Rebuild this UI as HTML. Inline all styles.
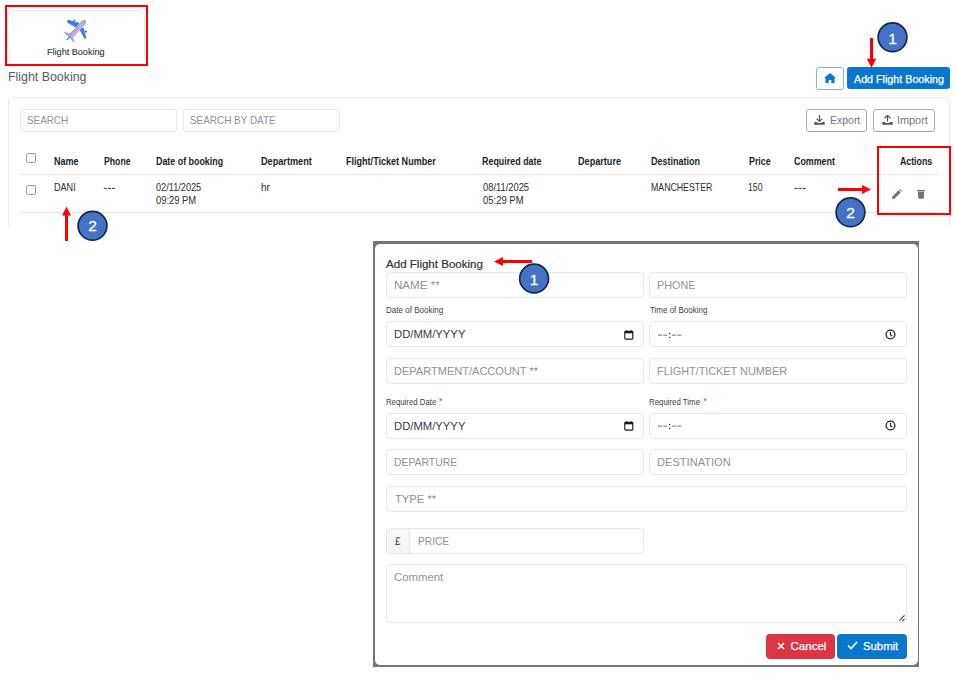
<!DOCTYPE html>
<html><head><meta charset="utf-8">
<style>
*{box-sizing:border-box;margin:0;padding:0}
html,body{width:956px;height:677px;overflow:hidden;background:#fff;font-family:"Liberation Sans",sans-serif;color:#212529}
.a{position:absolute}
.t{position:absolute;white-space:nowrap;line-height:1;transform-origin:0 0}
.inp{position:absolute;border:1px solid #e5e8eb;border-radius:4px;background:#fff}
.cb{position:absolute;width:10px;height:10px;border:1px solid #999b9d;border-radius:2px;background:#fff}
</style></head><body>

<!-- top-left tile -->
<div class="a" style="left:6.5px;top:9.5px;width:138.2px;height:56px;border:1px solid #e6ebef;border-radius:6px"></div>
<div class="a" style="left:5px;top:5px;width:143px;height:61px;border:2px solid #f00"></div>
<svg class="a" style="left:60px;top:15px" width="30" height="30" viewBox="0 0 30 30">
  <rect x="13.6" y="4.6" width="1.6" height="2" fill="#666" transform="rotate(20 14.4 5.6)"/>
  <rect x="25" y="15.8" width="2" height="1.6" fill="#666" transform="rotate(20 26 16.6)"/>
  <path d="M7.2 5.6 Q6.6 7.4 8.2 8.2 L16 12.4 L19.6 8 L9.2 5 Q7.8 4.7 7.2 5.6 Z" fill="#3d7fdc"/>
  <path d="M19.2 14.2 L24.3 23.2 Q25.3 24.6 26 23.6 Q26.3 22.8 26 21.6 L23.6 12.6 Z" fill="#3d7fdc"/>
  <path d="M4 17.6 Q3.8 16.9 4.8 16.9 L10.3 18.3 L13.6 23.8 L14.2 26.4 Q14 27.3 13 26.8 L8.3 21.8 Z" fill="#b6a3d6"/>
  <path d="M9.2 19.6 L21.8 6.2 Q24.2 4 25.8 5.3 Q27 6.7 25.4 9.2 L12.6 23.2 Q11.3 24 10.2 23.2 Q8.6 21.4 9.2 19.6 Z" fill="#c0aede"/>
  <path d="M9.2 19.6 L21.8 6.2 Q23 5 24 4.8 L10.5 19.8 Z" fill="#9f8fbd"/>
  <path d="M6.3 24.6 L10.2 20.6 Q11.2 20.2 11.4 21.2 L7.6 25.2 Q6.6 25.6 6.3 24.6 Z" fill="#3f9bf0"/>
  <ellipse cx="24.3" cy="6.5" rx="1.4" ry="0.8" fill="#56b0f0" transform="rotate(40 24.3 6.5)"/>
</svg>

<!-- home + add -->
<div class="a" style="left:816px;top:67px;width:27.5px;height:22.5px;border:1.2px solid #7cb9e9;border-radius:3px"></div>
<svg class="a" style="left:824px;top:73px" width="12" height="10" viewBox="0 0 12 10"><path d="M6 0 L12 5 L10.5 5 L10.5 10 L7.3 10 L7.3 7 L4.7 7 L4.7 10 L1.5 10 L1.5 5 L0 5 Z" fill="#0a74cf"/></svg>
<div class="a" style="left:847px;top:67px;width:103px;height:22px;background:#0a77cf;border-radius:3px"></div>

<!-- card -->
<div class="a" style="left:8px;top:97px;width:942px;height:160px;border:1px solid #e8ebee;border-radius:5px"></div>
<div class="a" style="left:0;top:226px;width:956px;height:40px;background:#fff"></div>

<div class="inp" style="left:20px;top:109px;width:157px;height:23px;border-radius:3px"></div>
<div class="inp" style="left:183px;top:109px;width:157px;height:23px;border-radius:3px"></div>

<div class="a" style="left:806px;top:109px;width:61px;height:23px;border:1.2px solid #a3a8ad;border-radius:3px"></div>
<div class="a" style="left:873px;top:109px;width:62px;height:23px;border:1.2px solid #a3a8ad;border-radius:3px"></div>
<svg class="a" style="left:814px;top:115px" width="11" height="10" viewBox="0 0 11 10"><path d="M5.5 0 V6" stroke="#50565c" stroke-width="1.2"/><path d="M2.6 3.6 L5.5 6.4 L8.4 3.6" fill="none" stroke="#50565c" stroke-width="1.3"/><path d="M0.3 7 H2.8 L3.8 8 H7.2 L8.2 7 H10.7 V9.8 H0.3 Z" fill="#50565c"/></svg>
<svg class="a" style="left:881.5px;top:115px" width="11" height="10" viewBox="0 0 11 10"><path d="M5.5 0.6 V6.6" stroke="#50565c" stroke-width="1.2"/><path d="M2.6 3.2 L5.5 0.4 L8.4 3.2" fill="none" stroke="#50565c" stroke-width="1.3"/><path d="M0.3 7 H2.8 L3.8 8 H7.2 L8.2 7 H10.7 V9.8 H0.3 Z" fill="#50565c"/></svg>

<!-- table -->
<div class="cb" style="left:26px;top:153px"></div>
<div class="a" style="left:20px;top:174px;width:918px;height:1px;background:#e3e7eb"></div>
<div class="cb" style="left:26px;top:185px"></div>
<div class="a" style="left:20px;top:212px;width:918px;height:1px;background:#e3e7eb"></div>
<svg class="a" style="left:103px;top:186.5px" width="13" height="3" viewBox="0 0 13 3"><rect x="0.8" y="0.8" width="3" height="1.2" fill="#4a4e53"/><rect x="4.9" y="0.8" width="3" height="1.2" fill="#4a4e53"/><rect x="9" y="0.8" width="3" height="1.2" fill="#4a4e53"/></svg>
<svg class="a" style="left:794px;top:186.5px" width="13" height="3" viewBox="0 0 13 3"><rect x="0.5" y="0.8" width="3" height="1.2" fill="#4a4e53"/><rect x="4.6" y="0.8" width="3" height="1.2" fill="#4a4e53"/><rect x="8.7" y="0.8" width="3" height="1.2" fill="#4a4e53"/></svg>

<!-- action icons -->
<svg class="a" style="left:891px;top:189px" width="11" height="11" viewBox="0 0 11 11"><path d="M1 10 L1.3 7.6 L7.6 1.3 L9.7 3.4 L3.4 9.7 Z" fill="#6c737a"/><path d="M8.2 0.7 L9 0 L11 2 L10.3 2.8 Z" fill="#6c737a"/></svg>
<svg class="a" style="left:916px;top:189px" width="10" height="11" viewBox="0 0 10 11"><rect x="1" y="1.1" width="8" height="1.4" rx="0.4" fill="#6c737a"/><path d="M1.8 3 H8.2 L7.7 9.3 Q7.6 9.8 7.1 9.8 H2.9 Q2.4 9.8 2.3 9.3 Z" fill="#6c737a"/></svg>
<div class="a" style="left:877px;top:146px;width:74px;height:69px;border:2px solid #f00"></div>

<!-- modal -->
<div class="a" style="left:373px;top:241px;width:546px;height:426px;background:#767676"></div>
<div class="a" style="left:374.5px;top:244px;width:543.5px;height:421px;background:#fff;border-radius:5px"></div>

<div class="inp" style="left:385.5px;top:272px;width:258px;height:26px"></div>
<div class="inp" style="left:649px;top:272px;width:258px;height:26px"></div>
<div class="inp" style="left:385.5px;top:321.3px;width:258px;height:26px"></div>
<div class="inp" style="left:649px;top:321.3px;width:258px;height:26px"></div>
<div class="inp" style="left:385.5px;top:358px;width:258px;height:26px"></div>
<div class="inp" style="left:649px;top:358px;width:258px;height:26px"></div>
<div class="inp" style="left:385.5px;top:412.5px;width:258px;height:26px"></div>
<div class="inp" style="left:649px;top:412.5px;width:258px;height:26px"></div>
<div class="inp" style="left:385.5px;top:449px;width:258px;height:26px"></div>
<div class="inp" style="left:649px;top:449px;width:258px;height:26px"></div>
<div class="inp" style="left:385.5px;top:485.5px;width:521.5px;height:26px"></div>
<div class="inp" style="left:385.5px;top:528px;width:258px;height:25.5px;overflow:hidden"><div class="a" style="left:0;top:0;width:23.5px;height:24px;background:#f6f7f8;border-right:1px solid #e5e8eb"></div></div>
<div class="inp" style="left:385.5px;top:564px;width:521.5px;height:58.5px"></div>
<svg class="a" style="left:898px;top:614px" width="8" height="8" viewBox="0 0 8 8"><path d="M6.5 1.4 L1.3 6.6 M6.6 4.9 L4.2 7" stroke="#444" stroke-width="1.1"/></svg>

<svg class="a" style="left:623.5px;top:329.5px" width="10" height="10" viewBox="0 0 10 10"><rect x="0.8" y="1.3" width="8" height="7.8" rx="0.8" fill="none" stroke="#1a1a1a" stroke-width="1.15"/><rect x="0.8" y="1.3" width="8" height="2" fill="#1a1a1a"/><rect x="1.8" y="0.3" width="1.1" height="1.5" fill="#1a1a1a"/><rect x="6.7" y="0.3" width="1.1" height="1.5" fill="#1a1a1a"/></svg>
<svg class="a" style="left:885px;top:329px" width="11" height="11" viewBox="0 0 11 11"><circle cx="5.5" cy="5.5" r="4.4" fill="none" stroke="#222" stroke-width="1.3"/><path d="M5.5 3 V5.7 L7.3 7" fill="none" stroke="#222" stroke-width="1.2"/></svg>
<svg class="a" style="left:623.5px;top:420.5px" width="10" height="10" viewBox="0 0 10 10"><rect x="0.8" y="1.3" width="8" height="7.8" rx="0.8" fill="none" stroke="#1a1a1a" stroke-width="1.15"/><rect x="0.8" y="1.3" width="8" height="2" fill="#1a1a1a"/><rect x="1.8" y="0.3" width="1.1" height="1.5" fill="#1a1a1a"/><rect x="6.7" y="0.3" width="1.1" height="1.5" fill="#1a1a1a"/></svg>
<svg class="a" style="left:885px;top:420px" width="11" height="11" viewBox="0 0 11 11"><circle cx="5.5" cy="5.5" r="4.4" fill="none" stroke="#222" stroke-width="1.3"/><path d="M5.5 3 V5.7 L7.3 7" fill="none" stroke="#222" stroke-width="1.2"/></svg>

<!-- time placeholders --:-- -->
<svg class="a" style="left:657px;top:331px" width="26" height="8" viewBox="0 0 26 8"><g fill="#767b80"><rect x="1" y="3.6" width="4" height="1.1"/><rect x="6.2" y="3.6" width="4" height="1.1"/><rect x="15" y="3.6" width="4" height="1.1"/><rect x="20.2" y="3.6" width="4" height="1.1"/></g><g fill="#2a2a2a"><circle cx="12.6" cy="2.4" r="0.75"/><circle cx="12.6" cy="6.6" r="0.75"/></g></svg>
<svg class="a" style="left:657px;top:422px" width="26" height="8" viewBox="0 0 26 8"><g fill="#767b80"><rect x="1" y="3.6" width="4" height="1.1"/><rect x="6.2" y="3.6" width="4" height="1.1"/><rect x="15" y="3.6" width="4" height="1.1"/><rect x="20.2" y="3.6" width="4" height="1.1"/></g><g fill="#2a2a2a"><circle cx="12.6" cy="2.4" r="0.75"/><circle cx="12.6" cy="6.6" r="0.75"/></g></svg>

<div class="a" style="left:765.5px;top:634px;width:69.5px;height:25px;background:#dc3545;border-radius:4px"></div>
<svg class="a" style="left:777px;top:642px" width="8" height="8" viewBox="0 0 8 8"><path d="M1 1 L7 7 M7 1 L1 7" stroke="#fff" stroke-width="1.6"/></svg>
<div class="a" style="left:837.2px;top:634px;width:69.5px;height:25px;background:#0a77cf;border-radius:4px"></div>
<svg class="a" style="left:847px;top:641px" width="11" height="9" viewBox="0 0 11 9"><path d="M1 4.5 L4 7.5 L10 1" fill="none" stroke="#fff" stroke-width="1.7"/></svg>

<div class="t" style="left:46.59px;top:47.09px;font-size:9.7px;font-weight:normal;color:#383c41;transform:scaleX(0.9374);-webkit-text-stroke:0.15px #383c41;">Flight Booking</div>
<div class="t" style="left:8.23px;top:70.94px;font-size:12px;font-weight:normal;color:#565b60;transform:scaleX(1.0318);">Flight Booking</div>
<div class="t" style="left:853.50px;top:73.61px;font-size:10.5px;font-weight:normal;color:#ffffff;transform:scaleX(1.0212);-webkit-text-stroke:0.25px #fff;">Add Flight Booking</div>
<div class="t" style="left:26.89px;top:114.97px;font-size:11.5px;font-weight:normal;color:#8d9297;transform:scaleX(0.8557);">SEARCH</div>
<div class="t" style="left:189.79px;top:114.97px;font-size:11.5px;font-weight:normal;color:#8d9297;transform:scaleX(0.8628);">SEARCH BY DATE</div>
<div class="t" style="left:829.78px;top:114.97px;font-size:11.5px;font-weight:normal;color:#6f767d;transform:scaleX(0.9111);">Export</div>
<div class="t" style="left:897.05px;top:114.97px;font-size:11.5px;font-weight:normal;color:#6f767d;transform:scaleX(0.9454);">Import</div>
<div class="t" style="left:54.44px;top:157.33px;font-size:10px;font-weight:bold;color:#1b1f23;transform:scaleX(0.9028);">Name</div>
<div class="t" style="left:103.61px;top:157.33px;font-size:10px;font-weight:bold;color:#1b1f23;transform:scaleX(0.8675);">Phone</div>
<div class="t" style="left:155.74px;top:157.33px;font-size:10px;font-weight:bold;color:#1b1f23;transform:scaleX(0.8884);">Date of booking</div>
<div class="t" style="left:261.23px;top:157.33px;font-size:10px;font-weight:bold;color:#1b1f23;transform:scaleX(0.9145);">Department</div>
<div class="t" style="left:345.53px;top:157.33px;font-size:10px;font-weight:bold;color:#1b1f23;transform:scaleX(0.9045);">Flight/Ticket Number</div>
<div class="t" style="left:482.44px;top:157.33px;font-size:10px;font-weight:bold;color:#1b1f23;transform:scaleX(0.8920);">Required date</div>
<div class="t" style="left:577.53px;top:157.33px;font-size:10px;font-weight:bold;color:#1b1f23;transform:scaleX(0.9102);">Departure</div>
<div class="t" style="left:651.14px;top:157.33px;font-size:10px;font-weight:bold;color:#1b1f23;transform:scaleX(0.8999);">Destination</div>
<div class="t" style="left:748.55px;top:157.33px;font-size:10px;font-weight:bold;color:#1b1f23;transform:scaleX(0.8860);">Price</div>
<div class="t" style="left:794.02px;top:157.33px;font-size:10px;font-weight:bold;color:#1b1f23;transform:scaleX(0.8874);">Comment</div>
<div class="t" style="left:899.96px;top:157.33px;font-size:10px;font-weight:bold;color:#1b1f23;transform:scaleX(0.8751);">Actions</div>
<div class="t" style="left:54.09px;top:182.87px;font-size:10.2px;font-weight:normal;color:#2a2e33;transform:scaleX(0.8918);">DANI</div>
<div class="t" style="left:155.81px;top:182.87px;font-size:10.2px;font-weight:normal;color:#2a2e33;transform:scaleX(0.8999);">02/11/2025</div>
<div class="t" style="left:155.81px;top:195.77px;font-size:10.2px;font-weight:normal;color:#2a2e33;transform:scaleX(0.9214);">09:29 PM</div>
<div class="t" style="left:261.27px;top:182.87px;font-size:10.2px;font-weight:normal;color:#2a2e33;transform:scaleX(0.9902);">hr</div>
<div class="t" style="left:482.51px;top:182.87px;font-size:10.2px;font-weight:normal;color:#2a2e33;transform:scaleX(0.9160);">08/11/2025</div>
<div class="t" style="left:482.50px;top:195.77px;font-size:10.2px;font-weight:normal;color:#2a2e33;transform:scaleX(0.9308);">05:29 PM</div>
<div class="t" style="left:650.81px;top:182.87px;font-size:10.2px;font-weight:normal;color:#2a2e33;transform:scaleX(0.8597);">MANCHESTER</div>
<div class="t" style="left:748.46px;top:182.87px;font-size:10.2px;font-weight:normal;color:#2a2e33;transform:scaleX(0.8495);">150</div>
<div class="t" style="left:386.20px;top:258.77px;font-size:11.5px;font-weight:normal;color:#2e3236;transform:scaleX(1.0043);-webkit-text-stroke:0.2px #2e3236;">Add Flight Booking</div>
<div class="t" style="left:394.10px;top:280.37px;font-size:11.5px;font-weight:normal;color:#8d9297;transform:scaleX(1.0065);">NAME **</div>
<div class="t" style="left:657.26px;top:280.37px;font-size:11.5px;font-weight:normal;color:#8d9297;transform:scaleX(0.9389);">PHONE</div>
<div class="t" style="left:385.67px;top:306.20px;font-size:8.5px;font-weight:normal;color:#3b4045;transform:scaleX(0.9454);">Date of Booking</div>
<div class="t" style="left:649.88px;top:306.20px;font-size:8.5px;font-weight:normal;color:#3b4045;transform:scaleX(0.9390);">Time of Booking</div>
<div class="t" style="left:394.12px;top:329.17px;font-size:11.5px;font-weight:normal;color:#373b3f;transform:scaleX(0.9802);">DD/MM/YYYY</div>
<div class="t" style="left:394.14px;top:366.07px;font-size:11.5px;font-weight:normal;color:#8d9297;transform:scaleX(0.9591);">DEPARTMENT/ACCOUNT **</div>
<div class="t" style="left:657.25px;top:366.07px;font-size:11.5px;font-weight:normal;color:#8d9297;transform:scaleX(0.9443);">FLIGHT/TICKET NUMBER</div>
<div class="t" style="left:385.69px;top:397.50px;font-size:8.5px;font-weight:normal;color:#3b4045;transform:scaleX(0.9163);">Required Date</div>
<div class="t" style="left:649.39px;top:397.50px;font-size:8.5px;font-weight:normal;color:#3b4045;transform:scaleX(0.9225);">Required Time</div>
<div class="t" style="left:394.12px;top:420.97px;font-size:11.5px;font-weight:normal;color:#373b3f;transform:scaleX(0.9802);">DD/MM/YYYY</div>
<div class="t" style="left:394.09px;top:456.97px;font-size:11.5px;font-weight:normal;color:#8d9297;transform:scaleX(0.9039);">DEPARTURE</div>
<div class="t" style="left:656.93px;top:456.97px;font-size:11.5px;font-weight:normal;color:#8d9297;transform:scaleX(0.9635);">DESTINATION</div>
<div class="t" style="left:394.72px;top:493.87px;font-size:11.5px;font-weight:normal;color:#8d9297;transform:scaleX(0.9776);">TYPE **</div>
<div class="t" style="left:395.15px;top:535.87px;font-size:11.5px;font-weight:normal;color:#2f3337;transform:scaleX(0.8512);">£</div>
<div class="t" style="left:417.60px;top:535.87px;font-size:11.5px;font-weight:normal;color:#8d9297;transform:scaleX(0.8855);">PRICE</div>
<div class="t" style="left:394.37px;top:572.47px;font-size:11.5px;font-weight:normal;color:#8d9297;transform:scaleX(0.9869);">Comment</div>
<div class="t" style="left:790.56px;top:641.07px;font-size:11.5px;font-weight:normal;color:#ffffff;-webkit-text-stroke:0.25px #fff;">Cancel</div>
<div class="t" style="left:862.75px;top:641.07px;font-size:11.5px;font-weight:normal;color:#ffffff;transform:scaleX(0.9839);-webkit-text-stroke:0.25px #fff;">Submit</div>
<span class="t" style="left:439px;top:397px;font-size:8.5px;color:#dc3545">*</span>
<span class="t" style="left:703.5px;top:397px;font-size:8.5px;color:#dc3545">*</span>

<!-- annotations -->
<svg class="a" style="left:0;top:0;overflow:visible" width="956" height="677">
  <g fill="#ff0000">
    <rect x="870" y="38" width="3" height="21"/><path d="M866.8 58.8 L876.2 58.8 L871.5 67.8 Z"/>
    <rect x="65" y="215" width="3" height="26"/><path d="M62 215.5 L71 215.5 L66.5 206.7 Z"/>
    <rect x="838" y="188" width="25" height="3"/><path d="M862 185 L862 194 L871 189.5 Z"/>
    <rect x="502" y="260" width="30" height="3"/><path d="M503 257 L503 266 L494 261.5 Z"/>
  </g>
  <g fill="#4472c4" stroke="#14284b" stroke-width="1.7">
    <circle cx="892.5" cy="37.3" r="14.4"/>
    <circle cx="92.5" cy="225.8" r="14.4"/>
    <circle cx="850.5" cy="212.3" r="14.4"/>
    <circle cx="534.1" cy="278.5" r="14.4"/>
  </g>
  <g fill="#fff" stroke="#fff" stroke-width="0.3" font-family="Liberation Sans" font-size="15.5" text-anchor="middle">
    <text x="892.5" y="44">1</text>
    <text x="92.5" y="231">2</text>
    <text x="850.5" y="218">2</text>
    <text x="534.1" y="285">1</text>
  </g>
</svg>
</body></html>
